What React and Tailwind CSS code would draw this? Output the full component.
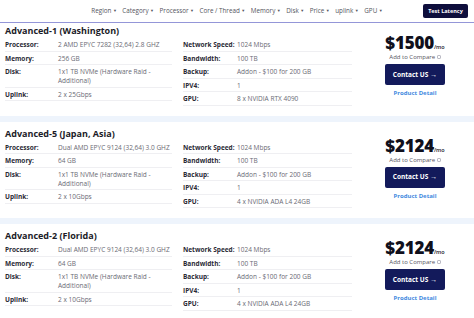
import React from "react";

const FONT = { fontFamily: '"Open Sans", "Noto Sans", sans-serif' };

const navItems = ["Region", "Category", "Processor", "Core / Thread", "Memory", "Disk", "Price", "uplink", "GPU"];

const servers = [
  {
    title: "Advanced-1 (Washington)",
    left: [
      ["Processor:", "2 AMD EPYC 7282 (32,64) 2.8 GHZ"],
      ["Memory:", "256 GB"],
      ["Disk:", "1x1 TB NVMe (Hardware Raid -\nAdditional)"],
      ["Uplink:", "2 x 25Gbps"],
    ],
    right: [
      ["Network Speed:", "1024 Mbps"],
      ["Bandwidth:", "100 TB"],
      ["Backup:", "Addon - $100 for 200 GB"],
      ["IPV4:", "1"],
      ["GPU:", "8 x NVIDIA RTX 4090"],
    ],
    price: "$1500",
  },
  {
    title: "Advanced-5 (Japan, Asia)",
    left: [
      ["Processor:", "Dual AMD EPYC 9124 (32,64) 3.0 GHZ"],
      ["Memory:", "64 GB"],
      ["Disk:", "1x1 TB NVMe (Hardware Raid -\nAdditional)"],
      ["Uplink:", "2 x 10Gbps"],
    ],
    right: [
      ["Network Speed:", "1024 Mbps"],
      ["Bandwidth:", "100 TB"],
      ["Backup:", "Addon - $100 for 200 GB"],
      ["IPV4:", "1"],
      ["GPU:", "4 x NVIDIA ADA L4 24GB"],
    ],
    price: "$2124",
  },
  {
    title: "Advanced-2 (Florida)",
    left: [
      ["Processor:", "Dual AMD EPYC 9124 (32,64) 3.0 GHZ"],
      ["Memory:", "64 GB"],
      ["Disk:", "1x1 TB NVMe (Hardware Raid -\nAdditional)"],
      ["Uplink:", "2 x 10Gbps"],
    ],
    right: [
      ["Network Speed:", "1024 Mbps"],
      ["Bandwidth:", "100 TB"],
      ["Backup:", "Addon - $100 for 200 GB"],
      ["IPV4:", "1"],
      ["GPU:", "4 x NVIDIA ADA L4 24GB"],
    ],
    price: "$2124",
  },
];

function SpecTable({ rows, width, labelW }) {
  return (
    <div className="flex flex-col" style={{ width }}>
      {rows.map(([k, v]) => (
        <div key={k} className="flex border-b border-[#efeff2] pt-[2px] pb-[1.5px] text-[6.5px] leading-[9px]">
          <div className="shrink-0 font-bold text-[#2a2a35]" style={{ width: labelW }}>{k}</div>
          <div className="whitespace-pre-line text-[#6a6a74]">{v}</div>
        </div>
      ))}
    </div>
  );
}

function Card({ s, first }) {
  return (
    <div>
      <div className={`flex ${first ? "pt-[2px]" : "pt-[6px]"} pb-[10px]`}>
        <div className="flex flex-col pl-[5px]">
          <div className="text-[9px] leading-[12px] font-bold text-[#1c1c28]">{s.title}</div>
          <div className="mt-[1px] flex gap-[11px]">
            <SpecTable rows={s.left} width="167px" labelW="53px" />
            <SpecTable rows={s.right} width="169px" labelW="54px" />
          </div>
        </div>
        <div className="flex flex-1 flex-col items-center justify-center pl-[4px]">
          <div className="flex items-baseline text-[#10101c]">
            <span className="text-[17px] leading-[19px] font-extrabold tracking-[-0.2px]">{s.price}</span>
            <span className="text-[5.5px] font-semibold">/mo</span>
          </div>
          <div className="mt-[1px] flex items-center gap-[1.5px] text-[6px] leading-[8px] text-[#555560]">
            Add to Compare
            <span className="inline-block h-[4px] w-[4px] rounded-[1px] border-[0.5px] border-[#bbbbc5]" />
          </div>
          <div className="mt-[3px] flex h-[21px] w-[60px] items-center justify-center gap-[2px] rounded-[2px] bg-[#131a5b] text-[6.5px] font-bold text-white">
            Contact US <span className="text-[7px]">→</span>
          </div>
          <div className="mt-[4px] text-[6px] leading-[8px] font-bold text-[#3f8ae0]">Product Detail</div>
        </div>
      </div>
      <div className="h-[6px] bg-[#eef4fc]" />
    </div>
  );
}

export default function App() {
  return (
    <div className="h-[318px] w-[474px] overflow-hidden bg-white" style={FONT}>
      <div className="grid h-[23px] grid-cols-[1fr_auto_1fr] items-center border-b-[1.5px] border-[#9496d8]">
        <div />
        <div className="flex items-center gap-[5.5px] text-[6.3px] text-[#55555e]">
          {navItems.map((n) => (
            <span key={n} className="flex items-center gap-[1.5px]">
              {n}
              <span className="text-[4px]">▼</span>
            </span>
          ))}
        </div>
        <div className="flex justify-end pr-[6px]">
          <div className="flex h-[14px] w-[45px] items-center justify-center rounded-[2px] bg-[#0e0e3c] text-[5.5px] font-bold text-white">
            Test Latency
          </div>
        </div>
      </div>
      {servers.map((s, i) => (
        <Card key={i} s={s} first={i === 0} />
      ))}
    </div>
  );
}
